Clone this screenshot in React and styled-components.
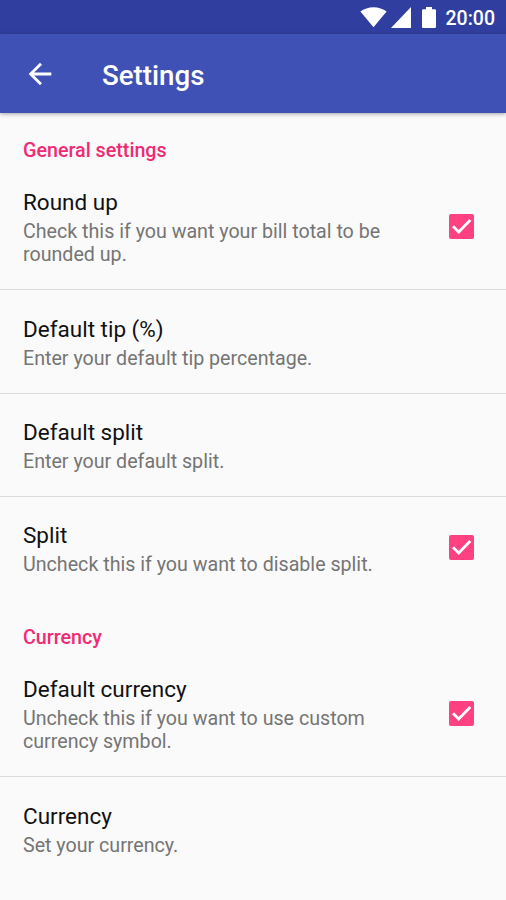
// LIBRARY
import React, { useState } from "react";

// STYLE
import styled, { createGlobalStyle } from "styled-components";

const sections = [
  {
    title: "General settings",
    items: [
      {
        id: "roundUp",
        title: "Round up",
        summary: [
          "Check this if you want your bill total to be",
          "rounded up.",
        ],
        check: true,
      },
      {
        id: "defaultTip",
        title: "Default tip (%)",
        summary: ["Enter your default tip percentage."],
      },
      {
        id: "defaultSplit",
        title: "Default split",
        summary: ["Enter your default split."],
      },
      {
        id: "split",
        title: "Split",
        summary: ["Uncheck this if you want to disable split."],
        check: true,
      },
    ],
  },
  {
    title: "Currency",
    items: [
      {
        id: "defaultCurrency",
        title: "Default currency",
        summary: [
          "Uncheck this if you want to use custom",
          "currency symbol.",
        ],
        check: true,
      },
      {
        id: "currency",
        title: "Currency",
        summary: ["Set your currency."],
      },
    ],
  },
];

const App = () => {
  const [checked, setChecked] = useState({
    roundUp: true,
    split: true,
    defaultCurrency: true,
  });

  const toggle = (id) => {
    setChecked({ ...checked, [id]: !checked[id] });
  };

  return (
    <React.Fragment>
      <GlobalStyle />
      <Screen>
        <StatusBar>
          <svg width="27" height="21" viewBox="0 0 27 21">
            <path d="M13.5 20.3 0.4 4.6C4 1.9 8.5 0.3 13.5 0.3s9.500 1.600 13.100 4.300z" />
          </svg>
          <svg width="20" height="21" viewBox="0 0 20 21">
            <path d="M0 21 20 0v21z" />
          </svg>
          <Battery width="14" height="21" viewBox="0 0 14 21">
            <path d="M12.700 2.200H10V0H4v2.200H1.300C.6 2.200 0 2.800 0 3.500v16.200C0 20.400.6 21 1.300 21h11.400c.7 0 1.300-.6 1.300-1.300V3.500c0-.7-.6-1.300-1.300-1.300z" />
          </Battery>
          <Clock>20:00</Clock>
        </StatusBar>

        <Toolbar>
          <BackBtn aria-label="Back">
            <svg width="34" height="34" viewBox="0 0 24 24">
              <path d="M20 11H7.830l5.590-5.590L12 4l-8 8 8 8 1.410-1.410L7.830 13H20v-2z" />
            </svg>
          </BackBtn>
          <ToolbarTitle>Settings</ToolbarTitle>
        </Toolbar>

        {sections.map((section) => (
          <Section key={section.title}>
            <Category>{section.title}</Category>
            {section.items.map((item) => (
              <Row key={item.id}>
                <RowText>
                  <RowTitle>{item.title}</RowTitle>
                  {item.summary.map((line) => (
                    <Summary key={line}>{line}</Summary>
                  ))}
                </RowText>
                {item.check ? (
                  <CheckBox
                    role="checkbox"
                    aria-checked={checked[item.id]}
                    aria-label={item.title}
                    $on={checked[item.id]}
                    onClick={() => toggle(item.id)}
                  >
                    {checked[item.id] ? (
                      <svg width="25" height="25" viewBox="0 0 25 25">
                        <path d="M4 12.300 9.700 17.900 21.300 6" />
                      </svg>
                    ) : (
                      ""
                    )}
                  </CheckBox>
                ) : (
                  ""
                )}
              </Row>
            ))}
          </Section>
        ))}
      </Screen>
    </React.Fragment>
  );
};

const GlobalStyle = createGlobalStyle`
  * {
    box-sizing: border-box;
  }
  body {
    margin: 0;
    background: #fafafa;
    font-family: Roboto, "Liberation Sans", sans-serif;
  }
`;
const Screen = styled.div`
  width: 100%;
  height: 900px;
  overflow: hidden;
  background: #fafafa;
`;
const StatusBar = styled.div`
  height: 34px;
  display: flex;
  align-items: center;
  justify-content: flex-end;
  padding: 1px 11px 0 0;
  background: #303f9f;
  svg {
    fill: #fff;
    margin-right: 4px;
  }
`;
const Battery = styled.svg`
  margin-left: 7px;
`;
const Clock = styled.span`
  margin-left: 5.500px;
  color: #fff;
  font-size: 19.5px;
  font-weight: 500;
  line-height: 34px;
  padding-top: 2px;
`;
const Toolbar = styled.header`
  height: 79px;
  display: flex;
  align-items: center;
  padding-left: 23px;
  background: #3f51b5;
  box-shadow: 0 1px 4px rgba(0, 0, 0, 0.35);
`;
const BackBtn = styled.button`
  width: 34px;
  height: 34px;
  padding: 0;
  border: none;
  background: none;
  cursor: pointer;
  svg {
    display: block;
    fill: #fff;
  }
`;
const ToolbarTitle = styled.h1`
  margin: 4px 0 0 45px;
  color: #fff;
  font-size: 27.7px;
  font-weight: 500;
`;
const Section = styled.section`
  & + & {
    margin-top: 1px;
  }
`;
const Category = styled.h2`
  height: 50.500px;
  margin: 0;
  padding: 26px 23px 0;
  color: #f02a73;
  font-size: 19.7px;
  font-weight: 500;
  line-height: 24px;
`;
const Row = styled.div`
  display: flex;
  align-items: center;
  justify-content: space-between;
  padding: 25.400px 32px 22.700px 23px;
  & + & {
    border-top: 1px solid #dcdcdc;
  }
`;
const RowText = styled.div`
  display: flex;
  flex-direction: column;
`;
const RowTitle = styled.p`
  margin: 0 0 4px;
  color: #111;
  font-size: 22.5px;
  line-height: 27px;
`;
const Summary = styled.p`
  margin: 0;
  color: #757575;
  font-size: 19.65px;
  line-height: 23.300px;
  white-space: nowrap;
`;
const CheckBox = styled.button`
  width: 25px;
  height: 25px;
  margin-bottom: 3px;
  padding: 0;
  border: ${(props) => (props.$on ? "none" : "3px solid #757575")};
  border-radius: 2px;
  background: ${(props) => (props.$on ? "#ff4081" : "transparent")};
  cursor: pointer;
  svg {
    display: block;
    fill: none;
    stroke: #fff;
    stroke-width: 2.8;
  }
`;

export default App;
